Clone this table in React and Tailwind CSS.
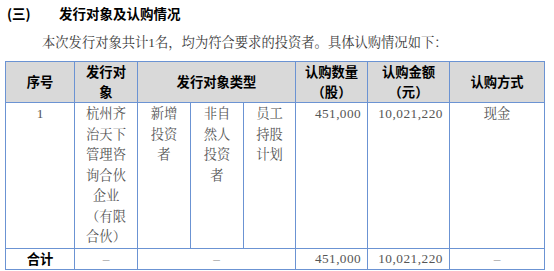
import React from 'react';

const serif = { fontFamily: '"Liberation Serif", "Noto Serif CJK SC", "Noto Sans CJK SC", serif' };

const App = () => {
  const td = 'border border-[#6b93d3] align-top text-center px-[6px] pt-[1px] leading-[20.5px]';
  const th = 'border border-[#6b93d3] bg-[#d9d9d9] text-center font-bold text-black px-[6px] leading-[20px]';
  return (
    <div className="w-[554px] h-[271px] bg-white overflow-hidden font-['Noto_Sans_CJK_SC',sans-serif] text-[13.5px]">
      <div className="pt-[3px] pl-[7px] h-[23px] leading-[20px] font-bold text-black flex">
        <span className="w-[52px]">(三)</span>
        <span>发行对象及认购情况</span>
      </div>
      <p className="mt-[10px] pl-[42px] leading-[20px] text-[13.3px] text-[#3a3a3a]" style={serif}>
        本次发行对象共计1名，均为符合要求的投资者。具体认购情况如下：
      </p>
      <table className="mt-[8px] ml-[5px] w-[539px] table-fixed border-collapse text-[13.3px]">
        <colgroup>
          <col className="w-[69px]" />
          <col className="w-[63px]" />
          <col className="w-[53px]" />
          <col className="w-[53px]" />
          <col className="w-[52px]" />
          <col className="w-[72px]" />
          <col className="w-[82px]" />
          <col className="w-[95px]" />
        </colgroup>
        <thead>
          <tr className="h-[41px]">
            <th className={th}>序号</th>
            <th className={th}>发行对象</th>
            <th className={th} colSpan={3}>发行对象类型</th>
            <th className={th}>认购数量（股）</th>
            <th className={th}>认购金额（元）</th>
            <th className={th}>认购方式</th>
          </tr>
        </thead>
        <tbody className="text-[#555555]" style={serif}>
          <tr className="h-[142px]">
            <td className={td}>1</td>
            <td className={td}>杭州齐治天下管理咨询合伙企业（有限合伙）</td>
            <td className={`${td} px-[8px]`}>新增投资者</td>
            <td className={`${td} px-[8px]`}>非自然人投资者</td>
            <td className={`${td} px-[8px]`}>员工持股计划</td>
            <td className={`${td} text-right pr-[6px] tracking-[0.4px]`}>451,000</td>
            <td className={`${td} text-right pr-[6px] tracking-[0.5px]`}>10,021,220</td>
            <td className={td}>现金</td>
          </tr>
          <tr className="h-[21px]">
            <td className="border border-[#6b93d3] text-center font-bold text-black leading-[20px] font-['Noto_Sans_CJK_SC',sans-serif]">合计</td>
            <td className="border border-[#6b93d3] text-center text-[#999]">–</td>
            <td className="border border-[#6b93d3] text-center text-[#999]" colSpan={3}>–</td>
            <td className="border border-[#6b93d3] text-right pr-[6px] tracking-[0.4px]">451,000</td>
            <td className="border border-[#6b93d3] text-right pr-[6px] tracking-[0.5px]">10,021,220</td>
            <td className="border border-[#6b93d3] text-center text-[#999]">–</td>
          </tr>
        </tbody>
      </table>
    </div>
  );
};

export default App;
